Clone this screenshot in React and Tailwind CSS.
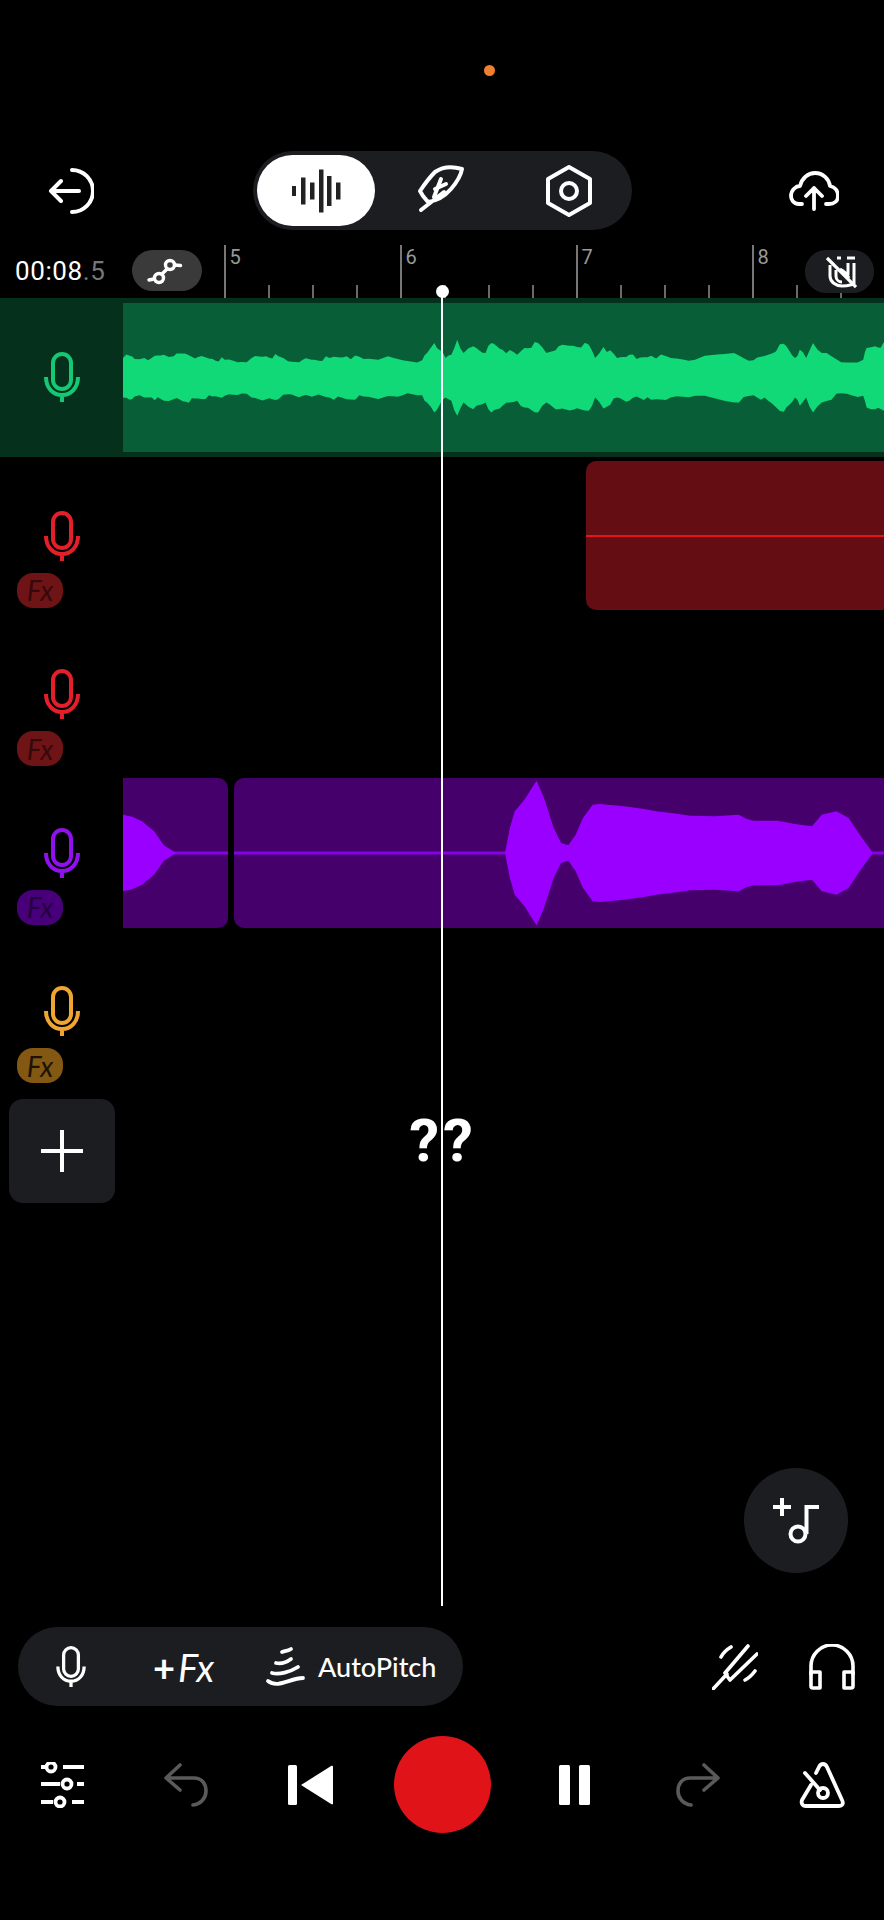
// Multitrack recorder screen
const GREEN_TOP = [[6,205],[20,198],[30,208],[50,205],[65,205],[90,195],[110,200],[135,192],[160,202],[190,208],[215,210],[250,217],[270,205],[300,200],[325,200],[345,215],[375,210],[400,210],[430,205],[465,200],[500,208],[540,205],[580,212],[620,212],[630,190],[645,160],[655,180],[668,205],[680,195],[692,150],[705,190],[725,170],[750,190],[762,160],[785,180],[815,195],[830,175],[858,160],[875,190],[900,170],[930,168],[962,165],[975,205],[992,172],[1020,205],[1045,195],[1060,208],[1090,198],[1130,205],[1180,210],[1260,190],[1300,212],[1330,195],[1362,162],[1385,205],[1395,180],[1408,205],[1422,160],[1440,190],[1480,218],[1525,210],[1532,175],[1550,170],[1572,165]];
const PURPLE_A = [[6,130],[25,136],[45,150],[70,180],[90,222],[115,245]];
const PURPLE_B = [[790,245],[800,170],[810,120],[830,85],[845,50],[855,28],[870,80],[890,170],[905,215],[920,222],[935,190],[950,140],[970,100],[985,98],[1000,100],[1025,103],[1050,108],[1075,113],[1100,120],[1135,126],[1170,133],[1220,135],[1270,130],[1285,142],[1300,148],[1350,148],[1385,158],[1420,165],[1440,130],[1470,120],[1495,140],[1520,195],[1545,245]];

// zoom-space points to clip-space polygon, each segment gets some finer jags
function greenWave() {
  const top = [];
  const bottom = [];
  let n = 0;
  GREEN_TOP.forEach(([x, y], i) => {
    const next = GREEN_TOP[i + 1] || [x + 1, y];
    const steps = next[0] - x > 20 ? 4 : 2;
    for (let s = 0; s < steps; s++) {
      const t = s / steps;
      const px = (x + (next[0] - x) * t) / 2.052 - 3;
      const amp = (262 - (y + (next[1] - y) * t)) / 3;
      const a = s === 0 ? 0 : ((n * 13) % 7 - 3) * 0.75;
      const b = s === 0 ? 0 : ((n * 11) % 5 - 2) * 0.9;
      top.push(`${px},${74 - amp - a}`);
      bottom.unshift(`${px},${74 + amp + 1.5 + b}`);
      n++;
    }
  });
  return [...top, ...bottom].join(" ");
}

function purpleWave(points, offset) {
  const top = points.map(([x, y]) => `${x / 2.052 - offset},${75 - (245 - y) / 3}`);
  const bottom = [...points].reverse().map(([x, y]) => `${x / 2.052 - offset},${75 + (245 - y) / 3}`);
  return [...top, ...bottom].join(" ");
}

const Mic = ({ className }) => (
  <svg viewBox="0 0 36 50" fill="none" stroke="currentColor" strokeWidth="4" className={className}>
    <rect x="9" y="2" width="18" height="35" rx="9" />
    <path d="M2 25c0 11 7 18 16 18s16-7 16-18M18 43v7" />
  </svg>
);

const Fx = ({ className }) => (
  <div className={`ml-[17px] mt-[12px] flex h-[35px] w-[46px] items-center justify-center rounded-[16px] font-[Lato,sans-serif] text-[28px] italic leading-none ${className}`}>
    Fx
  </div>
);

function Beat({ label }) {
  return (
    <div className="flex h-[53px] w-[176px] shrink-0">
      <div className="flex h-full w-[44px] shrink-0">
        <div className="h-full w-[1.5px] bg-[#777]" />
        <span className="ml-[4px] mt-[1px] font-[Roboto,sans-serif] text-[20px] leading-[22px] text-[#999]">{label}</span>
      </div>
      <div className="h-[13px] w-[44px] shrink-0 self-end"><div className="h-full w-[1.5px] bg-[#6a6a6a]" /></div>
      <div className="h-[13px] w-[44px] shrink-0 self-end"><div className="h-full w-[1.5px] bg-[#6a6a6a]" /></div>
      <div className="h-[13px] w-[44px] shrink-0 self-end"><div className="h-full w-[1.5px] bg-[#6a6a6a]" /></div>
    </div>
  );
}

export default function App() {
  return (
    <div className="relative h-[1920px] w-full overflow-hidden bg-black font-[Roboto,sans-serif] text-white">
      {/* status dot */}
      <div className="flex h-[151px] pl-[484px] pt-[65px]">
        <div className="h-[11px] w-[11px] rounded-full bg-[#f08030]" />
      </div>

      {/* header */}
      <div className="flex h-[79px] items-center">
        <svg viewBox="0 0 46 46" fill="none" stroke="white" strokeWidth="4" strokeLinecap="round" strokeLinejoin="round" className="ml-[48px] h-[46px] w-[46px] shrink-0">
          <path d="M3 23h28M13 13 3 23l10 10M24 2a21 21 0 0 1 0 42" />
        </svg>
        <div className="ml-[159px] flex h-[79px] w-[379px] shrink-0 items-center rounded-[40px] bg-[#1c1d20] pl-[4px]">
          <div className="flex h-[71px] w-[118px] shrink-0 items-center justify-center rounded-[36px] bg-white">
            <svg viewBox="0 0 50 44" className="h-[44px] w-[50px]" fill="#222">
              <rect x="1" y="17" width="4" height="10" />
              <rect x="10" y="8.5" width="4.500" height="27" />
              <rect x="19" y="13.5" width="4.500" height="17" />
              <rect x="28" y="0.5" width="4.500" height="43" />
              <rect x="36" y="7" width="4.500" height="30" />
              <rect x="45" y="13.5" width="4.500" height="17" />
            </svg>
          </div>
          <svg viewBox="0 0 70 70" fill="none" stroke="white" strokeWidth="4" strokeLinecap="round" strokeLinejoin="round" className="ml-[33px] h-[70px] w-[70px] shrink-0">
            <path d="M54 13C44 10 34 11 27 16 21 22 16 29 12 35l3 5 5 6c8-1 16-5 23-13 6-7 10-14 11-20ZM13 54l23-18M33 23l-7 18M27 33l11-5" />
          </svg>
          <svg viewBox="0 0 46 52" fill="none" stroke="white" strokeWidth="4" strokeLinejoin="round" className="ml-[68px] h-[52px] w-[46px] shrink-0">
            <path d="M23 2 44 14v24L23 50 2 38V14Z" />
            <circle cx="23" cy="26" r="8" />
          </svg>
        </div>
        <svg viewBox="0 0 50 40" fill="none" stroke="white" strokeWidth="3.8" strokeLinecap="round" strokeLinejoin="round" className="ml-[157px] h-[40px] w-[50px] shrink-0">
          <path d="M13 33h-3C4 33 2 28 2 25c0-6 5-10 9-10C13 7 19 2 26 2c8 0 14 6 15 13 5 1 8 5 8 10s-4 8-9 8h-3M25 38V17M17 25l8-8 8 8" />
        </svg>
      </div>

      {/* ruler */}
      <div className="relative mt-[15px] flex h-[53px]">
        <div className="flex h-[41px] w-[224px] shrink-0 items-center self-start pt-[5px] box-content">
          <span className="ml-[15px] w-[117px] shrink-0 text-[26px] leading-none tracking-[0.6px]">
            00:08<span className="text-[#777]">.5</span>
          </span>
          <div className="flex h-[41px] w-[70px] shrink-0 items-center justify-center rounded-[21px] bg-[#3a3a3a]">
            <svg viewBox="0 0 40 30" fill="none" stroke="white" strokeWidth="3.4" strokeLinecap="round" className="h-[30px] w-[40px]">
              <circle cx="23" cy="9" r="4.5" />
              <circle cx="12" cy="22" r="4.5" />
              <path d="m20 13-5 5M2 24l5-1M27.5 9l6 .5" />
            </svg>
          </div>
        </div>
        <div className="flex min-w-0 flex-1 overflow-hidden">
          <Beat label="5" />
          <Beat label="6" />
          <Beat label="7" />
          <Beat label="8" />
        </div>
        <div className="absolute right-[10px] top-[5px] flex h-[43px] w-[69px] items-center justify-center rounded-[21px] bg-[#1c1d20]">
          <svg viewBox="0 0 34 34" fill="none" stroke="white" strokeWidth="3" className="h-[34px] w-[34px]">
            <path d="M4 3l29 29" strokeWidth="3.2" />
            <path d="M7 10v11c0 6 6 10 12 10 5 0 8-1 12-2M13 15v6c0 4 3 6 6 6M14 3h4M24 3h8M31 8v21M25 8v12M17 14c4 2 7 5 9 9" />
          </svg>
        </div>
      </div>

      {/* tracks */}
      <div className="flex h-[158.5px] items-center bg-[#04301c]">
        <div className="h-full w-[123px] shrink-0 pt-[54px]">
          <Mic className="ml-[44px] h-[50px] w-[36px] text-[#14c874]" />
        </div>
        <div className="h-[149px] min-w-0 flex-1 overflow-hidden bg-[#075e37]">
          <svg viewBox="0 0 761 149" className="block h-full w-full" fill="#11d977">
            <polygon points={greenWave()} />
          </svg>
        </div>
      </div>

      <div className="flex h-[158.5px] items-center">
        <div className="h-full w-[123px] shrink-0 pt-[54px]">
          <Mic className="ml-[44px] h-[50px] w-[36px] text-[#e3202a]" />
          <Fx className="bg-[#6e1416] text-[#38090b]" />
        </div>
        <div className="flex min-w-0 flex-1 justify-end">
          <div className="flex h-[149px] w-[298px] items-center rounded-l-[10px] bg-[#640d12]">
            <div className="h-[2px] w-full bg-[#e0161c]" />
          </div>
        </div>
      </div>

      <div className="flex h-[158.5px] items-center">
        <div className="h-full w-[123px] shrink-0 pt-[54px]">
          <Mic className="ml-[44px] h-[50px] w-[36px] text-[#e3202a]" />
          <Fx className="bg-[#6e1416] text-[#38090b]" />
        </div>
      </div>

      <div className="flex h-[158.5px] items-center">
        <div className="h-full w-[123px] shrink-0 pt-[54px]">
          <Mic className="ml-[44px] h-[50px] w-[36px] text-[#9010f0]" />
          <Fx className="bg-[#47007a] text-[#25003f]" />
        </div>
        <div className="flex min-w-0 flex-1 gap-[6px]">
          <div className="h-[150px] w-[105px] shrink-0 overflow-hidden rounded-r-[10px] bg-[#46006c]">
            <svg viewBox="0 0 105 150" className="block h-full w-full" fill="#9900ff">
              <rect x="0" y="73.5" width="105" height="3" fill="#8a00e6" />
              <polygon points={purpleWave(PURPLE_A, 3)} />
            </svg>
          </div>
          <div className="h-[150px] min-w-0 flex-1 overflow-hidden rounded-l-[10px] bg-[#46006c]">
            <svg viewBox="0 0 650 150" className="block h-full w-full" fill="#9900ff">
              <rect x="0" y="73.5" width="650" height="3" fill="#8a00e6" />
              <polygon points={purpleWave(PURPLE_B, 114)} />
            </svg>
          </div>
        </div>
      </div>

      <div className="flex h-[158.5px] items-center">
        <div className="h-full w-[123px] shrink-0 pt-[54px]">
          <Mic className="ml-[44px] h-[50px] w-[36px] text-[#f0a530]" />
          <Fx className="bg-[#835812] text-[#1c1305]" />
        </div>
      </div>

      {/* add track */}
      <div className="ml-[9px] mt-[8.5px] flex h-[104px] w-[106px] items-center justify-center rounded-[14px] bg-[#1c1d20]">
        <svg viewBox="0 0 42 42" fill="none" stroke="white" strokeWidth="4" className="h-[42px] w-[42px]">
          <path d="M21 0v42M0 21h42" />
        </svg>
      </div>

      {/* add note */}
      <div className="mt-[265px] flex h-[105px] justify-end pr-[36px]">
        <div className="flex h-[105px] w-[104px] items-center justify-center rounded-full bg-[#1c1d20]">
          <svg viewBox="0 0 46 46" fill="none" stroke="white" strokeWidth="4" className="h-[46px] w-[46px]">
            <path d="M0 9h18M9 0v18" />
            <circle cx="25" cy="36" r="7.500" />
            <path d="M33.500 36V9H46" />
          </svg>
        </div>
      </div>

      {/* tools */}
      <div className="mt-[54px] flex h-[79px] items-center">
        <div className="ml-[18px] flex h-[79px] w-[445px] shrink-0 items-center rounded-[40px] bg-[#1c1d20] pl-[38px]">
          <Mic className="h-[41px] w-[30px] shrink-0 text-white" />
          <span className="ml-[67px] flex w-[62px] shrink-0 items-center font-[Lato,sans-serif] text-[38px] leading-none">
            <span className="w-[25px] shrink-0 font-bold">+</span>
            <span className="italic">Fx</span>
          </span>
          <svg viewBox="10 8 42 44" fill="none" stroke="white" strokeWidth="3.8" strokeLinecap="round" className="ml-[50px] h-[44px] w-[42px] shrink-0">
            <path d="M27 15c3-1 6-1 9-3M21 26c5 1 11-1 15-4M17 36c7 2 18-1 26-6M13 44c10 8 22-3 35-3" />
          </svg>
          <span className="ml-[11px] font-[Lato,sans-serif] text-[27px] font-medium leading-none">AutoPitch</span>
        </div>
        <svg viewBox="0 0 46 46" fill="none" stroke="white" strokeWidth="3.6" strokeLinecap="round" className="ml-[249px] h-[46px] w-[46px] shrink-0">
          <path d="m1 45 14-15M13 29 36 2M18 36 45 10M14 30c1 2 2 4 4 6M9 13c2-4 5-7 10-10M33 36c4-2 7-5 10-9" />
        </svg>
        <svg viewBox="0 0 46 46" fill="none" stroke="white" strokeWidth="3.6" strokeLinejoin="round" className="ml-[51px] h-[46px] w-[46px] shrink-0">
          <path d="M2 31v-9a21 21 0 0 1 42 0v9" />
          <path d="M2 28h9v16H4a2 2 0 0 1-2-2ZM44 28h-9v16h7a2 2 0 0 0 2-2Z" />
        </svg>
      </div>

      {/* transport */}
      <div className="mt-[30px] flex h-[97px] items-center">
        <svg viewBox="0 0 44 46" fill="none" stroke="white" strokeWidth="4.2" className="ml-[40px] h-[46px] w-[44px] shrink-0">
          <path d="M1 5h4M23 5h21M1 22h19M37 22h7M1 40h12M32 40h12" />
          <circle cx="11" cy="5" r="4.5" strokeWidth="3.8" />
          <circle cx="27" cy="22" r="4.5" strokeWidth="3.8" />
          <circle cx="20" cy="40" r="4.5" strokeWidth="3.8" />
        </svg>
        <svg viewBox="0 0 44 44" fill="none" stroke="#5a5a5a" strokeWidth="3.6" strokeLinecap="round" strokeLinejoin="round" className="ml-[80px] h-[44px] w-[44px] shrink-0">
          <path d="M16 2 2 15l14 12M2 15h28c8 0 12 6 12 13s-5 13-13 14" />
        </svg>
        <svg viewBox="0 0 45 40" fill="white" className="ml-[80px] h-[40px] w-[45px] shrink-0">
          <rect x="0" y="0" width="9" height="40" rx="1.5" />
          <path d="M13 20 43.5.8c.7-.4 1.5 0 1.5.8v36.800c0 .8-.8 1.200-1.500.8Z" />
        </svg>
        <div className="ml-[61px] h-[97px] w-[97px] shrink-0 rounded-full bg-[#e01418]" />
        <div className="ml-[68px] flex h-[40px] w-[31px] shrink-0 justify-between">
          <div className="h-full w-[11px] rounded-[1.5px] bg-white" />
          <div className="h-full w-[11px] rounded-[1.5px] bg-white" />
        </div>
        <svg viewBox="0 0 44 44" fill="none" stroke="#5a5a5a" strokeWidth="3.6" strokeLinecap="round" strokeLinejoin="round" className="ml-[86px] h-[44px] w-[44px] shrink-0">
          <path d="M28 2l14 13-14 12M42 15H14C6 15 2 21 2 28s5 13 13 14" />
        </svg>
        <svg viewBox="0 0 70 70" fill="none" stroke="white" strokeWidth="3.8" strokeLinecap="round" strokeLinejoin="round" className="ml-[70px] h-[70px] w-[70px] shrink-0">
          <path d="M26 23l3-6c2-4 6-4 8 0l15 33c2 4 0 6-3 6H16c-4 0-5-3-4-6l9-15M15 23l15 17" />
          <circle cx="33" cy="43" r="5" />
        </svg>
      </div>

      {/* playhead */}
      <div className="absolute left-[441px] top-[292px] h-[1314px] w-[2px] bg-white" />
      <div className="absolute left-[436px] top-[285px] h-[13px] w-[13px] rounded-full bg-white" />
      <div className="absolute left-[443px] top-[1106px] -translate-x-1/2 whitespace-nowrap font-[Roboto,sans-serif] text-[60px] font-bold leading-[70px] tracking-[4px] text-white">
        ??
      </div>
    </div>
  );
}
